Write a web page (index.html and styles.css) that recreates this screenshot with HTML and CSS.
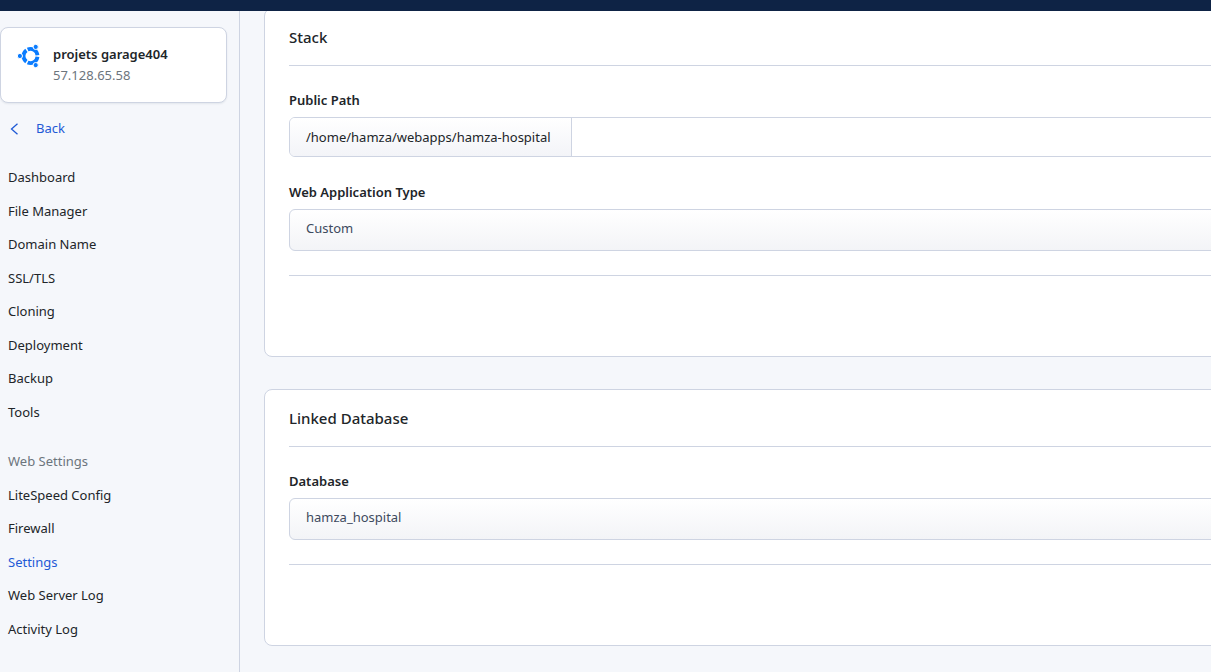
FILE: index.html
```html
<!DOCTYPE html>
<html lang="en">
<head>
<meta charset="utf-8">
<meta name="viewport" content="width=device-width, initial-scale=1">
<title>Settings</title>
<link rel="stylesheet" href="styles.css">
</head>
<body>
<header class="topbar"></header>
<div class="layout">
  <aside class="sidebar">
    <div class="server">
      <svg class="server-logo" viewBox="0 0 24 24" aria-hidden="true">
        <g fill="none" stroke="#0a7cff" stroke-width="3.8">
          <path d="M20.46 11.27A7 7 0 0 0 10.65 5.61"/>
          <path d="M9.39 6.34A7 7 0 0 0 9.39 17.66"/>
          <path d="M10.65 18.39A7 7 0 0 0 20.46 12.73"/>
        </g>
        <g fill="#0a7cff" stroke="#fff" stroke-width="1">
          <circle cx="2.900" cy="12" r="2.600"/>
          <circle cx="18.700" cy="2.900" r="2.600"/>
          <circle cx="18.700" cy="21.100" r="2.600"/>
        </g>
      </svg>
      <div>
        <div class="server-name">projets garage404</div>
        <div class="server-ip">57.128.65.58</div>
      </div>
    </div>
    <a class="back" href="#">
      <svg class="back-icon" viewBox="0 0 12 12" aria-hidden="true"><path d="M9.500 0.700L3.500 6l6 5.300" fill="none" stroke="currentColor" stroke-width="1.300"/></svg>
      Back
    </a>
    <nav>
      <ul class="menu menu-main">
        <li><a href="#">Dashboard</a></li>
        <li><a href="#">File Manager</a></li>
        <li><a href="#">Domain Name</a></li>
        <li><a href="#">SSL/TLS</a></li>
        <li><a href="#">Cloning</a></li>
        <li><a href="#">Deployment</a></li>
        <li><a href="#">Backup</a></li>
        <li><a href="#">Tools</a></li>
      </ul>
      <ul class="menu menu-web">
        <li class="menu-title">Web Settings</li>
        <li><a href="#">LiteSpeed Config</a></li>
        <li><a href="#">Firewall</a></li>
        <li><a class="active" href="#" aria-current="page">Settings</a></li>
        <li><a href="#">Web Server Log</a></li>
        <li><a href="#">Activity Log</a></li>
      </ul>
    </nav>
  </aside>
  <main class="content">
    <section class="card">
      <h2 class="card-title">Stack</h2>
      <div class="card-body">
        <div class="field">
          <label for="path">Public Path</label>
          <div class="input-group">
            <span class="prefix">/home/hamza/webapps/hamza-hospital</span>
            <input id="path" type="text">
          </div>
        </div>
        <div class="field">
          <label for="type">Web Application Type</label>
          <select id="type"><option>Custom</option></select>
        </div>
      </div>
      <div class="card-footer"></div>
    </section>
    <section class="card">
      <h2 class="card-title">Linked Database</h2>
      <div class="card-body">
        <div class="field">
          <label for="database">Database</label>
          <select id="database"><option>hamza_hospital</option></select>
        </div>
      </div>
      <div class="card-footer"></div>
    </section>
  </main>
</div>
</body>
</html>
```
FILE: styles.css
```css
* {
  box-sizing: border-box;
}

body {
  margin: 0;
  background: #f5f7fb;
  color: #212529;
  font: 13px/21px "Noto Sans", "Open Sans", sans-serif;
  overflow-x: hidden;
}

a {
  color: inherit;
  text-decoration: none;
}

.topbar {
  position: fixed;
  top: 0;
  left: 0;
  right: 0;
  z-index: 1;
  height: 11px;
  background: #0e2345;
}

.layout {
  display: grid;
  grid-template-columns: 240px minmax(0, 1fr);
  min-height: 100vh;
  overflow: hidden;
}

.sidebar {
  padding-top: 27px;
  border-right: 1px solid #ced4e2;
}

.server {
  display: flex;
  gap: 12px;
  margin-right: 12px;
  padding: 16px;
  border: 1px solid #ced4e2;
  border-radius: 8px;
  background: #fff;
  box-shadow: 0 1px 2px #0e234514;
}

.server > div {
  padding-bottom: 0;
}

.server-logo {
  width: 24px;
  height: 24px;
}

.server-name {
  font-weight: 600;
}

.server-ip {
  color: #6c757d;
}

.back {
  display: flex;
  align-items: center;
  gap: 16px;
  margin-top: 15px;
  padding-left: 8px;
  color: #1f5ad6;
}

.back-icon {
  width: 12px;
  height: 12px;
}

.menu {
  display: grid;
  grid-auto-rows: 1fr;
  align-items: center;
  margin: 0;
  padding: 0 8px;
  list-style: none;
}

.menu-main {
  min-height: 268px;
  margin-top: 22px;
}

.menu-web {
  min-height: 201px;
  margin-top: 16px;
}

.menu-title {
  color: #6c757d;
}

.active {
  color: #1f5ad6;
}

.content {
  padding: 8px 0 26px 24px;
}

/* Cards run past the right edge of the window. */
.card {
  margin: 0 -48px 32px 0;
  padding: 0 24px;
  border: 1px solid #ced4e2;
  border-radius: 8px;
  background: #fff;
}

.card:last-child {
  margin-bottom: 0;
}

.card-title {
  margin: 0;
  padding: 16px 0;
  border-bottom: 1px solid #ced4e2;
  font-size: 15px;
  line-height: 24px;
  font-weight: 500;
}

.card-body {
  display: grid;
  gap: 25px;
  padding: 24px 0;
}

.field {
  display: grid;
  gap: 6px;
}

label {
  font-weight: 600;
}

.input-group {
  display: flex;
  height: 40px;
  border: 1px solid #ced4e2;
  border-radius: 6px;
  overflow: hidden;
}

.prefix {
  display: flex;
  align-items: center;
  padding: 0 20px 0 16px;
  border-right: 1px solid #ced4e2;
  background: linear-gradient(#fff, #f3f4f8);
}

input {
  flex: 1;
  min-width: 0;
  padding: 0 16px;
  border: 0;
  font: inherit;
}

select {
  appearance: none;
  width: 100%;
  height: 42px;
  padding: 0 16px 4px;
  border: 1px solid #ced4e2;
  border-radius: 6px;
  background: linear-gradient(#fff, #f3f4f7);
  color: #3e4a5e;
  font: inherit;
}

.card-footer {
  min-height: 81px;
  border-top: 1px solid #ced4e2;
}
```
